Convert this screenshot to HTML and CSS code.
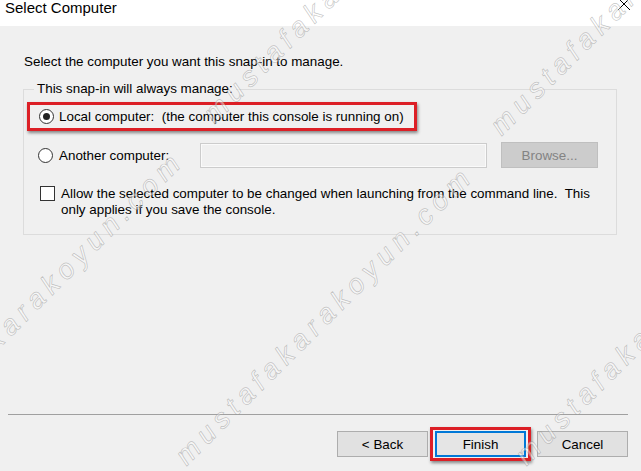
FILE: index.html
```html
<!DOCTYPE html>
<html lang="en">
<head>
    <meta charset="UTF-8">
    <title>Select Computer</title>
    <link rel="stylesheet" href="styles.css">
</head>
<body>
    <div class="dialog">
        <div class="titlebar">
            <span class="title">Select Computer</span>
            <svg class="close" width="14" height="14" viewBox="0 0 14 14">
                <path d="M1 1L13 13M13 1L1 13" stroke="#000" stroke-width="1" fill="none"/>
            </svg>
        </div>

        <div class="content">
            <p class="intro">Select the computer you want this snap-in to manage.</p>
            <fieldset class="group">
                <legend>This snap-in will always manage:</legend>
                <div class="row local">
                    <span class="radio checked"></span>
                    <span>Local computer:&nbsp; (the computer this console is running on)</span>
                </div>
                <div class="row another">
                    <span class="radio"></span>
                    <span class="label">Another computer:</span>
                    <span class="textbox"></span>
                    <span class="btn disabled browse">Browse...</span>
                </div>
                <div class="row check">
                    <span class="checkbox"></span>
                    <span>Allow the selected computer to be changed when launching from the command line.&nbsp; This<br>only applies if you save the console.</span>
                </div>
            </fieldset>
        </div>

        <div class="footer">
            <div class="separator"></div>
            <div class="buttons">
                <span class="btn">&lt; Back</span>
                <span class="mark"><span class="btn focused">Finish</span></span>
                <span class="btn cancel">Cancel</span>
            </div>
        </div>

        <!-- watermark over the screenshot -->
        <div class="watermark">
            <span style="left:-100px; top:455px">mustafakarakoyun.com</span>
            <span style="left:218px; top:128px">mustafakarakoyun.com</span>
            <span style="left:190px; top:470px">mustafakarakoyun.com</span>
            <span style="left:505px; top:140px">mustafakarakoyun.com</span>
            <span style="left:530px; top:470px">mustafakarakoyun.com</span>
        </div>
    </div>
</body>
</html>
```

FILE: styles.css
```css
body {
    margin: 0;
    background-color: #f0f0f0;
    font-family: "Liberation Sans", Arial, sans-serif;
    font-size: 13.4px;
    color: #000;
}
.dialog {
    position: relative;
    width: 641px;
    height: 471px;
    overflow: hidden;
    display: flex;
    flex-direction: column;
}
.titlebar {
    height: 26px;
    background: #fff;
    display: flex;
    justify-content: space-between;
    padding-left: 5px;
}
.title {
    font-size: 15px;
    line-height: 15px;
}
.close {
    margin-top: -3px;
    margin-right: 10px;
}
.content {
    padding: 28px 24px 0 23px;
}
.intro {
    margin: 0;
    line-height: 16px;
    padding-left: 1px;
}
.group {
    margin: 11px 0 0;
    padding: 0 0 16px;
    border: 1px solid #dcdcdc;
    min-width: 0;
}
.group legend {
    margin-left: 10px;
    padding: 0 3px;
    line-height: 16px;
}
.row {
    display: flex;
    align-items: center;
}
.local {
    margin: 5px 0 0 3px;
    width: 390px;
    height: 29px;
    box-sizing: border-box;
    border: 3px solid #dc1f26;
    box-shadow: 1px 2px 3px rgba(0, 0, 0, 0.45);
    padding-left: 9px;
    gap: 5px;
}
.another {
    margin-top: 11px;
    height: 26px;
    padding-left: 14px;
}
.another .radio {
    margin-right: 6px;
}
.label {
    width: 141px;
    flex: none;
}
.check {
    align-items: flex-start;
    margin-top: 18px;
    padding-left: 16px;
    gap: 6px;
    line-height: 16px;
}
.radio {
    width: 15px;
    height: 15px;
    box-sizing: border-box;
    border: 1px solid #333;
    border-radius: 50%;
    background: #fff;
    display: flex;
    align-items: center;
    justify-content: center;
    flex: none;
}
.radio.checked::after {
    content: "";
    width: 7px;
    height: 7px;
    border-radius: 50%;
    background: #222;
}
.checkbox {
    width: 15px;
    height: 15px;
    box-sizing: border-box;
    border: 1px solid #333;
    background: #fff;
    flex: none;
}
.textbox {
    width: 287px;
    height: 25px;
    box-sizing: border-box;
    border: 1px solid #cccccc;
    box-shadow: inset 0 0 0 1px #fafafa;
    background: #f0f0f0;
    align-self: flex-end;
}
.btn {
    width: 91px;
    height: 26px;
    box-sizing: border-box;
    border: 1px solid #adadad;
    background: #e1e1e1;
    display: flex;
    align-items: center;
    justify-content: center;
}
.browse {
    width: 97px;
    margin-left: 14px;
}
.btn.disabled {
    background: #cccccc;
    border-color: #bfbfbf;
    color: #838383;
}
.btn.focused {
    border-color: #0078d7;
    box-shadow: inset 0 0 0 1px #0078d7;
    background: #e5e5e5;
}
.footer {
    margin-top: auto;
}
.separator {
    margin: 0 13px 0 8px;
    border-top: 1px solid #a0a0a0;
}
.buttons {
    display: flex;
    align-items: center;
    justify-content: flex-end;
    padding: 12px 13px 10px 0;
}
.mark {
    margin-left: 2px;
    padding: 1px 2px;
    border: 3px solid #dc1f26;
    box-shadow: 1px 2px 3px rgba(0, 0, 0, 0.45);
}
.cancel {
    margin-left: 6px;
}
.watermark {
    position: absolute;
    inset: 0;
    pointer-events: none;
}
.watermark span {
    position: absolute;
    white-space: nowrap;
    font-size: 28px;
    font-style: italic;
    letter-spacing: 6px;
    line-height: 28px;
    margin-top: -28px;
    transform-origin: 0 100%;
    transform: rotate(-45deg);
    color: rgba(255, 255, 255, 0.45);
    -webkit-text-stroke: 0.7px rgba(130, 130, 130, 0.45);
}
```
